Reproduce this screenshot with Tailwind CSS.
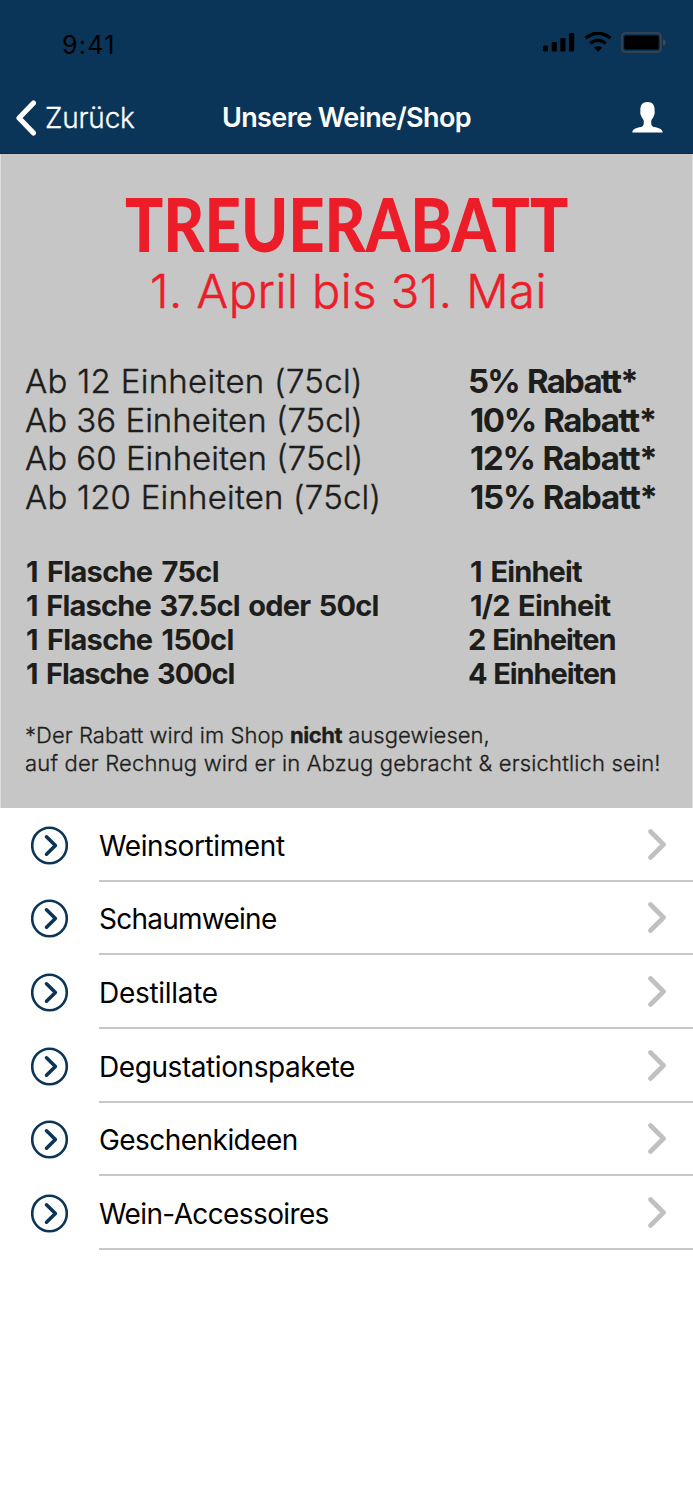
<!DOCTYPE html>
<html lang="de">
<head>
  <meta charset="UTF-8" />
  <title>Unsere Weine/Shop</title>
  <script src="https://cdn.jsdelivr.net/npm/@tailwindcss/browser@4"></script>
</head>
<body class="bg-white w-[693px] h-[1500px] overflow-hidden flex flex-col font-['Inter',sans-serif]">
  <header class="h-[154px] shrink-0 bg-[#0b3558] border-b border-[#082a48]">
    <!-- Statusleiste -->
    <div class="h-[81px] pt-[9px] pl-[62px] pr-[27px] flex items-center justify-between">
      <span class="text-[25px] leading-none tracking-[1.3px] text-black">9:41</span>
      <div class="flex items-center gap-[10px] -mt-[6px]">
        <svg class="w-8 h-5" viewBox="0 0 32 20">
          <rect x="0" y="13.5" width="5" height="6" rx="1.2" />
          <rect x="8.7" y="10" width="5.2" height="9.5" rx="1.2" />
          <rect x="17.3" y="6" width="5.2" height="13.5" rx="1.2" />
          <rect x="26" y="1" width="5.2" height="18.5" rx="1.2" />
        </svg>
        <svg class="w-[27px] h-5" viewBox="0 0 27 20">
          <path d="M0.5 6.2Q13-3.8 25.5 6.2" fill="none" stroke="#000" stroke-width="3.4" />
          <path d="M5.2 11.4Q13 5 20.800 11.4" fill="none" stroke="#000" stroke-width="3.3" />
          <path d="M8.8 15.5Q13 12.4 17.2 15.5L13 19.7Z" />
        </svg>
        <svg class="w-[45px] h-[21px] -ml-px" viewBox="0 0 45 21">
          <rect x="0.9" y="0.9" width="39" height="19.2" rx="3.5" fill="none" stroke="#40474e" stroke-width="1.5" />
          <rect x="3.2" y="3.5" width="34.5" height="14" rx="1.5" />
          <path d="M42 7Q44.800 8 44.800 10.5T42 14Z" fill="#40474e" />
        </svg>
      </div>
    </div>
    <!-- Navigation -->
    <nav class="h-[73px] grid grid-cols-[1fr_auto_1fr] items-center text-white pl-4 pr-[30px]">
      <a href="#" class="flex items-center gap-[9px]">
        <svg class="w-5 h-9" viewBox="0 0 20 36">
          <path d="M17.5 3L3 18l14.5 15" fill="none" stroke="#fff" stroke-width="5.2" stroke-linecap="round" stroke-linejoin="round" />
        </svg>
        <span class="text-[28px] leading-none font-light tracking-[-0.2px] [-webkit-text-stroke:0.3px]">Zurück</span>
      </a>
      <h1 class="text-[27px] leading-none font-semibold tracking-[-0.6px] ml-[14px]">Unsere Weine/Shop</h1>
      <svg class="w-[31px] h-8 justify-self-end -mt-[2px]" viewBox="0 0 31 32" fill="#fff">
        <path d="M15.5 1C20.5 1 23 4 22.6 10C22.9 11.5 22.6 13.5 21.9 14.6C21.5 17 19.3 18.5 19.2 20C19.2 24 19.5 25.3 22 26C27 26.9 30.5 28 30.7 31.5H.3C.5 28 4 26.9 9 26C11.5 25.3 11.8 24 11.8 20C11.7 18.5 9.5 17 9.1 14.6C8.4 13.5 8.1 11.5 8.4 10C8 4 10.5 1 15.5 1Z" />
      </svg>
    </nav>
  </header>

  <!-- Treuerabatt -->
  <section class="h-[654px] shrink-0 bg-[#c6c6c6] border-x border-[#dcdcdc] pt-[33px] px-[24px] text-[#1d1d1b] whitespace-nowrap">
    <div class="flex flex-col items-center text-[#ec1c28]">
      <h2 class="h-[74px] w-[442px] flex items-center justify-center font-['Lato'] font-black text-[74px] leading-none"><span class="scale-x-[0.857]">TREUERABATT</span></h2>
      <p class="h-14 mt-px flex items-center font-light text-[47px] leading-none tracking-[0.5px] ml-[4px] [-webkit-text-stroke:0.5px]">1. April bis 31. Mai</p>
    </div>

    <div class="mt-[44px] grid grid-cols-[443px_1fr] text-[33px] leading-[38.7px]">
      <p class="font-light tracking-[0.3px] [-webkit-text-stroke:0.4px]">Ab 12 Einheiten (75cl)</p>
      <p class="font-bold tracking-[-1.8px] [word-spacing:2px]">5% Rabatt*</p>
      <p class="font-light [-webkit-text-stroke:0.4px]">Ab 36 Einheiten (75cl)</p>
      <p class="font-bold tracking-[-1.4px] [word-spacing:1px] pl-[2px]">10% Rabatt*</p>
      <p class="font-light [-webkit-text-stroke:0.4px]">Ab 60 Einheiten (75cl)</p>
      <p class="font-bold tracking-[-1.2px] [word-spacing:1px] pl-[2px]">12% Rabatt*</p>
      <p class="font-light tracking-[0.2px] [-webkit-text-stroke:0.4px]">Ab 120 Einheiten (75cl)</p>
      <p class="font-bold tracking-[-1.2px] [word-spacing:1px] pl-[2px]">15% Rabatt*</p>
    </div>

    <div class="mt-[38px] grid grid-cols-[443px_1fr] text-[29px] leading-[34px] font-bold">
      <p class="tracking-[-0.7px] [word-spacing:3px] pl-px">1 Flasche 75cl</p>
      <p class="tracking-[-0.9px] [word-spacing:3px] pl-[2px]">1 Einheit</p>
      <p class="tracking-[-0.8px] [word-spacing:2.5px] pl-px">1 Flasche 37.5cl oder 50cl</p>
      <p class="tracking-[-0.7px] [word-spacing:2px] pl-[2px]">1/2 Einheit</p>
      <p class="tracking-[-0.7px] [word-spacing:3px] pl-px">1 Flasche 150cl</p>
      <p class="tracking-[-1px] [word-spacing:1px]">2 Einheiten</p>
      <p class="tracking-[-1.15px] [word-spacing:3px] pl-px">1 Flasche 300cl</p>
      <p class="tracking-[-1.1px] [word-spacing:1px]">4 Einheiten</p>
    </div>

    <div class="mt-[30px] text-[22px] leading-[28.2px] font-light [-webkit-text-stroke:0.3px]">
      <p class="tracking-[0.05px]">*Der Rabatt wird im Shop <b class="font-bold tracking-[-0.5px]">nicht</b> ausgewiesen,</p>
      <p class="tracking-[0.17px]">auf der Rechnug wird er in Abzug gebracht &amp; ersichtlich sein!</p>
    </div>
  </section>

  <svg class="hidden">
    <symbol id="kreis" viewBox="0 0 38 40">
      <ellipse cx="18.5" cy="19.5" rx="17.3" ry="17.8" fill="none" stroke="#0b3558" stroke-width="2.6" />
      <path d="M15.5 10.8L24.4 19.5L15.5 28.2" fill="none" stroke="#0b3558" stroke-width="3.6" stroke-linecap="round" stroke-linejoin="round" />
    </symbol>
    <symbol id="pfeil" viewBox="0 0 20 32">
      <path d="M3.5 2.5L16.500 15.5L3.5 28.5" fill="none" stroke="#c0c0c2" stroke-width="4.6" stroke-linecap="round" stroke-linejoin="round" />
    </symbol>
  </svg>

  <ul class="text-[28px] leading-none text-black">
    <li class="h-[73.65px] flex items-center pl-[31px]">
      <svg class="w-[38px] h-10 mt-[2px]"><use href="#kreis" /></svg>
      <a href="#" class="ml-[30px] h-full flex-1 flex items-center justify-between border-b-2 border-[#c8c8cb] pt-[2px] pr-[26px]">
        <span class="tracking-[-0.4px] mt-[2px]">Weinsortiment</span>
        <svg class="w-5 h-8"><use href="#pfeil" /></svg>
      </a>
    </li>
    <li class="h-[73.65px] flex items-center pl-[31px]">
      <svg class="w-[38px] h-10 mt-[2px]"><use href="#kreis" /></svg>
      <a href="#" class="ml-[30px] h-full flex-1 flex items-center justify-between border-b-2 border-[#c8c8cb] pt-[2px] pr-[26px]">
        <span class="tracking-[-0.75px] mt-[2px]">Schaumweine</span>
        <svg class="w-5 h-8"><use href="#pfeil" /></svg>
      </a>
    </li>
    <li class="h-[73.65px] flex items-center pl-[31px]">
      <svg class="w-[38px] h-10 mt-[2px]"><use href="#kreis" /></svg>
      <a href="#" class="ml-[30px] h-full flex-1 flex items-center justify-between border-b-2 border-[#c8c8cb] pt-[2px] pr-[26px]">
        <span class="tracking-[-0.3px] mt-[2px]">Destillate</span>
        <svg class="w-5 h-8"><use href="#pfeil" /></svg>
      </a>
    </li>
    <li class="h-[73.65px] flex items-center pl-[31px]">
      <svg class="w-[38px] h-10 mt-[2px]"><use href="#kreis" /></svg>
      <a href="#" class="ml-[30px] h-full flex-1 flex items-center justify-between border-b-2 border-[#c8c8cb] pt-[2px] pr-[26px]">
        <span class="tracking-[-0.42px] mt-[2px]">Degustationspakete</span>
        <svg class="w-5 h-8"><use href="#pfeil" /></svg>
      </a>
    </li>
    <li class="h-[73.65px] flex items-center pl-[31px]">
      <svg class="w-[38px] h-10 mt-[2px]"><use href="#kreis" /></svg>
      <a href="#" class="ml-[30px] h-full flex-1 flex items-center justify-between border-b-2 border-[#c8c8cb] pt-[2px] pr-[26px]">
        <span class="tracking-[-0.55px] mt-[2px]">Geschenkideen</span>
        <svg class="w-5 h-8"><use href="#pfeil" /></svg>
      </a>
    </li>
    <li class="h-[73.65px] flex items-center pl-[31px]">
      <svg class="w-[38px] h-10 mt-[2px]"><use href="#kreis" /></svg>
      <a href="#" class="ml-[30px] h-full flex-1 flex items-center justify-between border-b-2 border-[#c8c8cb] pt-[2px] pr-[26px]">
        <span class="tracking-[-0.62px] mt-[2px]">Wein-Accessoires</span>
        <svg class="w-5 h-8"><use href="#pfeil" /></svg>
      </a>
    </li>
  </ul>
</body>
</html>
